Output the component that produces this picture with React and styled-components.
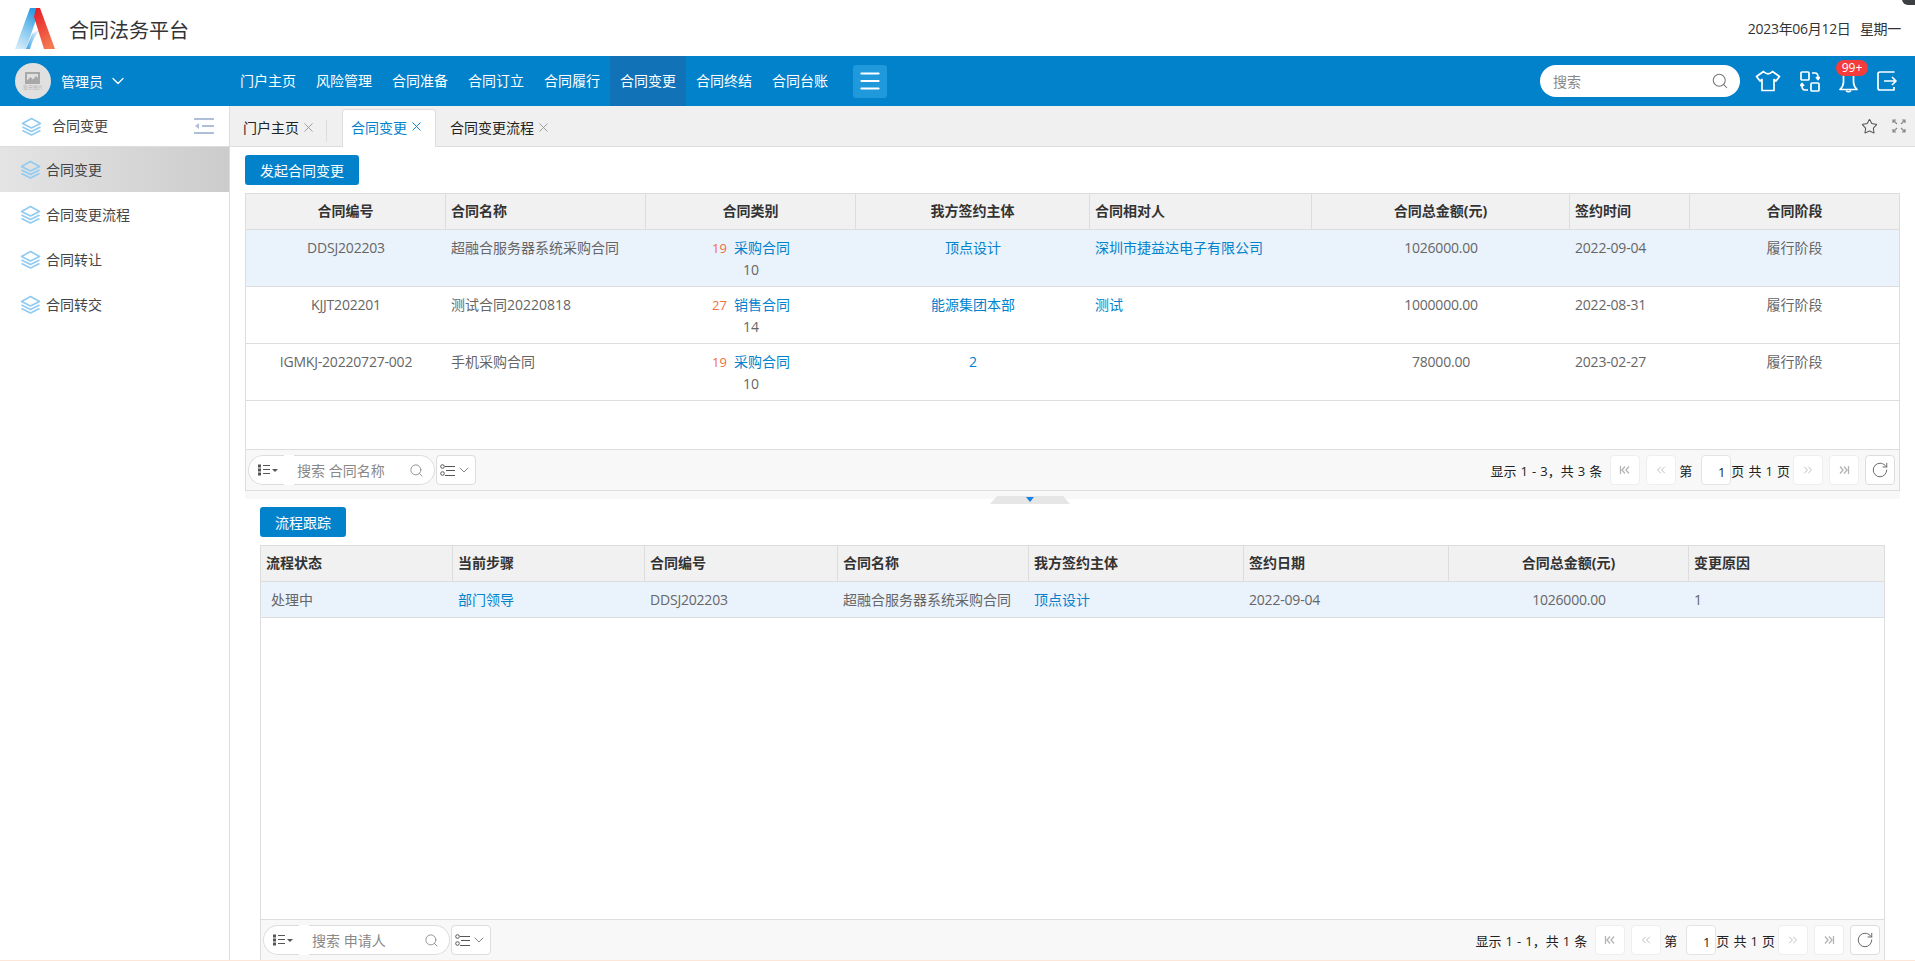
import React from "react";
import styled, { createGlobalStyle } from "styled-components";
import { ChevronDown, ChevronsLeft, ChevronsRight, Menu, RotateCw, Search, Star, X } from "lucide-react";

const GlobalStyle = createGlobalStyle`
  html, body, #root {
    margin: 0;
    height: 100%;
  }
  body {
    font-family: "Open Sans", "Noto Sans CJK SC", sans-serif;
    font-size: 14px;
    color: #333;
    background: #fff;
    overflow: hidden;
  }
  * {
    box-sizing: border-box;
  }
`;

const menus = ["门户主页", "风险管理", "合同准备", "合同订立", "合同履行", "合同变更", "合同终结", "合同台账"];
const sideItems = ["合同变更", "合同变更流程", "合同转让", "合同转交"];

const contractCols = [
  { title: "合同编号", key: "no", align: "center", tight: true },
  { title: "合同名称", key: "name", align: "left" },
  { title: "合同类别", key: "type", align: "center" },
  { title: "我方签约主体", key: "owner", align: "center", link: true },
  { title: "合同相对人", key: "other", align: "left", link: true },
  { title: "合同总金额(元)", key: "amount", align: "center", tight: true },
  { title: "签约时间", key: "date", align: "left", tight: true },
  { title: "合同阶段", key: "stage", align: "center" },
];

const contracts = [
  { no: "DDSJ202203", name: "超融合服务器系统采购合同", count: 19, type: "采购合同", sub: 10, owner: "顶点设计", other: "深圳市捷益达电子有限公司", amount: "1026000.00", date: "2022-09-04", stage: "履行阶段" },
  { no: "KJJT202201", name: "测试合同20220818", count: 27, type: "销售合同", sub: 14, owner: "能源集团本部", other: "测试", amount: "1000000.00", date: "2022-08-31", stage: "履行阶段" },
  { no: "IGMKJ-20220727-002", name: "手机采购合同", count: 19, type: "采购合同", sub: 10, owner: "2", other: "", amount: "78000.00", date: "2023-02-27", stage: "履行阶段" },
];

const flowCols = [
  { title: "流程状态", key: "state", align: "left", inset: true },
  { title: "当前步骤", key: "step", align: "left", link: true },
  { title: "合同编号", key: "no", align: "left", tight: true },
  { title: "合同名称", key: "name", align: "left" },
  { title: "我方签约主体", key: "owner", align: "left", link: true },
  { title: "签约日期", key: "date", align: "left", tight: true },
  { title: "合同总金额(元)", key: "amount", align: "center", tight: true },
  { title: "变更原因", key: "reason", align: "left" },
];

const flows = [
  { state: "处理中", step: "部门领导", no: "DDSJ202203", name: "超融合服务器系统采购合同", owner: "顶点设计", date: "2022-09-04", amount: "1026000.00", reason: "1" },
];

const Page = styled.div`
  display: flex;
  flex-direction: column;
  height: 961px;
  width: 1915px;
  overflow: hidden;
  border-bottom: 1px solid #fbe6d8;
  position: relative;
`;

const CornerMark = styled.div`
  position: absolute;
  top: -8px;
  right: -6px;
  width: 19px;
  height: 13px;
  border-radius: 6px;
  background: #3c4043;
`;

const TopBar = styled.header`
  height: 56px;
  flex: none;
  display: flex;
  align-items: center;
  padding: 0 14px 0 15px;
`;

const Title = styled.h1`
  margin: 2px 0 0 14px;
  font-size: 20px;
  font-weight: 400;
  color: #333;
`;

const DateText = styled.div`
  margin-left: auto;
  font-size: 14px;
  color: #333;
  word-spacing: 6px;
  letter-spacing: -0.3px;
`;

const NavBar = styled.nav`
  height: 50px;
  flex: none;
  display: flex;
  align-items: center;
  background: #0382cc;
  color: #fff;
  padding: 0 18px 0 15px;
`;

const Avatar = styled.div`
  width: 36px;
  height: 36px;
  border-radius: 50%;
  background: #e0e0e0;
  color: #b4b4b4;
  display: flex;
  flex-direction: column;
  align-items: center;
  justify-content: center;
  flex: none;
  font-size: 5px;
  line-height: 7px;
`;

const UserName = styled.div`
  display: flex;
  align-items: center;
  gap: 5px;
  width: 169px;
  margin-left: 10px;
  padding-bottom: 1px;
`;

const MenuItem = styled.a`
  width: 76px;
  height: 50px;
  line-height: 50px;
  text-align: center;
  flex: none;
  background: ${(p) => (p.$active ? "#1172b8" : "transparent")};
`;

const MenuToggle = styled.button`
  width: 34px;
  height: 33px;
  margin-left: 15px;
  padding: 0;
  border: 0;
  border-radius: 3px;
  background: #1f98dc;
  color: #fff;
  display: flex;
  align-items: center;
  justify-content: center;
`;

const SearchBox = styled.div`
  margin-left: auto;
  width: 200px;
  height: 32px;
  border-radius: 16px;
  background: #fff;
  color: #888;
  display: flex;
  align-items: center;
  justify-content: space-between;
  padding: 0 11px 0 13px;
  font-size: 14px;
  transform: translateX(1px);
`;

const ToolIcons = styled.div`
  display: flex;
  align-items: center;
  gap: 19px;
  margin-left: 16px;
`;

const BellWrap = styled.div`
  position: relative;
  display: flex;
`;

const Badge = styled.span`
  position: absolute;
  top: -9px;
  left: -3px;
  width: 32px;
  height: 16px;
  border-radius: 8px;
  background: #f43c3c;
  color: #fff;
  font-size: 12px;
  line-height: 16px;
  text-align: center;
`;

const Body = styled.div`
  flex: 1;
  display: flex;
  min-height: 0;
`;

const Sidebar = styled.aside`
  width: 230px;
  flex: none;
  border-right: 1px solid #ddd;
`;

const SideHead = styled.div`
  height: 41px;
  display: flex;
  align-items: center;
  padding: 0 15px 0 21px;
  color: #444;
  border-bottom: 1px solid #ddd;
  svg:last-child {
    margin-left: auto;
  }
`;

const SideHeadLabel = styled.span`
  margin-left: 10px;
  padding-bottom: 3px;
`;

const SideItem = styled.div`
  height: 45px;
  display: flex;
  align-items: center;
  gap: 5px;
  padding-left: 20px;
  color: #444;
  background: ${(p) => (p.$active ? "linear-gradient(90deg, #e4e4e4, #cccccc)" : "transparent")};
`;

const SideLabel = styled.span`
  padding-bottom: 2px;
`;

const Main = styled.main`
  flex: 1;
  min-width: 0;
  display: flex;
  flex-direction: column;
`;

const TabsBar = styled.div`
  height: 41px;
  flex: none;
  display: flex;
  align-items: flex-end;
  background: #f0f0f0;
  border-bottom: 1px solid #ddd;
  padding: 0 9px 0 13px;
`;

const Tab = styled.div`
  height: ${(p) => (p.$active ? "38px" : "36px")};
  display: flex;
  align-items: center;
  gap: 2px;
  padding: ${(p) => (p.$active ? "0 11px 4px 8px" : "0 1px 4px 0")};
  margin-bottom: -1px;
  margin-left: ${(p) => p.$left || 0}px;
  color: ${(p) => (p.$active ? "#0382cc" : "#222")};
  background: ${(p) => (p.$active ? "#fff" : "transparent")};
  border: ${(p) => (p.$active ? "1px solid #ddd" : "0")};
  border-bottom: 0;
  border-radius: 3px 3px 0 0;
  svg {
    color: ${(p) => (p.$active ? "#0382cc" : "#999")};
  }
`;

const TabSep = styled.i`
  width: 1px;
  height: 22px;
  margin: 0 15px 4px 9px;
  background: #ddd;
`;

const TabTools = styled.div`
  margin-left: auto;
  align-self: center;
  display: flex;
  align-items: center;
  gap: 14px;
  color: #555;
`;

const UpperPane = styled.section`
  height: 344px;
  flex: none;
  display: flex;
  flex-direction: column;
  padding: 8px 15px 0;
`;

const LowerPane = styled.section`
  flex: 1;
  min-height: 0;
  display: flex;
  flex-direction: column;
  padding: 3px 30px 0 30px;
`;

const ActionButton = styled.button`
  height: 30px;
  width: ${(p) => p.$width}px;
  flex: none;
  padding: 0;
  border: 0;
  border-radius: 3px;
  background: #0382cc;
  color: #fff;
  font: inherit;
`;

const TableBox = styled.div`
  flex: 1;
  min-height: 0;
  margin-top: ${(p) => p.$top}px;
  display: flex;
  flex-direction: column;
  border: 1px solid #ddd;
  border-bottom: ${(p) => (p.$open ? "0" : "1px solid #ddd")};
`;

const HeadRow = styled.div`
  height: 36px;
  flex: none;
  display: grid;
  grid-template-columns: ${(p) => p.$cols};
  background: #f1f1f1;
  border-bottom: 1px solid #ddd;
  font-weight: 700;
  color: #333;
`;

const HeadCell = styled.div`
  line-height: 33px;
  padding: 0 5px;
  text-align: ${(p) => p.$align};
  white-space: nowrap;
  border-right: 1px solid #ddd;
  &:last-child {
    border-right: 0;
  }
`;

const Rows = styled.div`
  flex: 1;
  min-height: 0;
`;

const Row = styled.div`
  height: ${(p) => p.$height}px;
  display: grid;
  grid-template-columns: ${(p) => p.$cols};
  background: ${(p) => (p.$selected ? "#eaf2fc" : "#fff")};
  border-bottom: 1px solid #ddd;
  color: #666;
  line-height: 21px;
`;

const Cell = styled.div`
  padding: ${(p) => (p.$inset ? "7px 5px 0 10px" : "7px 5px 0")};
  text-align: ${(p) => p.$align};
  white-space: nowrap;
  color: ${(p) => (p.$link ? "#0382cc" : "#666")};
  letter-spacing: ${(p) => (p.$tight ? "-0.2px" : "normal")};
`;

const Count = styled.span`
  color: #f0703a;
  font-size: 13px;
  margin-right: 7px;
`;

const TypeLink = styled.span`
  color: #0382cc;
`;

const FootBar = styled.div`
  height: 41px;
  flex: none;
  display: flex;
  align-items: center;
  justify-content: space-between;
  padding: 0 4px 0 2px;
  background: #f8f8f8;
  border-top: 1px solid #ddd;
`;

const FootLeft = styled.div`
  display: flex;
  align-items: center;
`;

const ListPicker = styled.div`
  width: 36px;
  height: 30px;
  display: flex;
  align-items: center;
  justify-content: flex-end;
  gap: 2px;
  padding-right: 6px;
  background: #fff;
  border: 1px solid #ddd;
  border-right: 0;
  border-radius: 15px 0 0 15px;
  color: #555;
`;

const Caret = styled.i`
  width: 0;
  height: 0;
  border-top: 3px solid #555;
  border-left: 3px solid transparent;
  border-right: 3px solid transparent;
`;

const SearchField = styled.div`
  width: 141px;
  height: 30px;
  margin-left: 10px;
  display: flex;
  align-items: center;
  justify-content: space-between;
  padding: 0 10px 0 3px;
  background: #fff;
  border: 1px solid #ddd;
  border-left: 0;
  border-radius: 0 15px 15px 0;
  color: #888;
  box-shadow: -10px 0 0 #fff;
`;

const ColumnButton = styled.div`
  width: 40px;
  height: 30px;
  margin-left: 1px;
  display: flex;
  align-items: center;
  justify-content: center;
  gap: 1px;
  background: #fff;
  border: 1px solid #ddd;
  border-radius: 4px;
  color: #777;
`;

const Pager = styled.div`
  display: flex;
  align-items: center;
  font-size: 13px;
  color: #222;
`;

const PagerText = styled.span`
  margin: ${(p) => p.$margin || "0"};
  white-space: nowrap;
  word-spacing: 0.7px;
`;

const PageButton = styled.div`
  width: 30px;
  height: 30px;
  margin-left: ${(p) => p.$left || 0}px;
  display: flex;
  align-items: center;
  justify-content: center;
  background: #fff;
  border: 1px solid ${(p) => (p.$strong ? "#ddd" : "#eee")};
  border-radius: 4px;
  color: ${(p) => (p.$strong ? "#666" : "#b4b4b4")};
`;

const PageInput = styled.div`
  width: 30px;
  height: 30px;
  margin-left: 9px;
  padding-right: 5px;
  line-height: 32px;
  text-align: right;
  background: #fff;
  border: 1px solid #e4e4e4;
  border-radius: 4px;
`;

const Divider = styled.div`
  height: 13px;
  flex: none;
  margin: 0 15px;
  display: flex;
  justify-content: center;
  align-items: flex-end;
  background: linear-gradient(#f8f8f8 8px, transparent 8px);
  padding-right: 85px;
`;

const Handle = styled.div`
  width: 80px;
  height: 8px;
  display: flex;
  justify-content: center;
  padding-top: 1px;
  background: #e6e6e6;
  clip-path: polygon(7px 0, 73px 0, 100% 100%, 0 100%);
  i {
    width: 0;
    height: 0;
    border-top: 5px solid #1b7fe8;
    border-left: 4px solid transparent;
    border-right: 4px solid transparent;
  }
`;

const Logo = () => (
  <svg width="40" height="41" viewBox="0 0 40 41">
    <defs>
      <linearGradient id="logoBlue" x1="0.2" y1="1" x2="0.6" y2="0">
        <stop offset="0" stopColor="#d2ebfa" />
        <stop offset="0.55" stopColor="#7cc3ee" />
        <stop offset="1" stopColor="#2b9ae0" />
      </linearGradient>
      <linearGradient id="logoFold" x1="1" y1="0" x2="0" y2="1">
        <stop offset="0" stopColor="#ffffff" />
        <stop offset="1" stopColor="#3fa3e6" />
      </linearGradient>
      <linearGradient id="logoRed" x1="0.2" y1="0" x2="0.6" y2="1">
        <stop offset="0" stopColor="#e61f2a" />
        <stop offset="1" stopColor="#f4794f" />
      </linearGradient>
    </defs>
    <path d="M15 0H25L11 41H0Z" fill="url(#logoBlue)" />
    <path d="M11 41L17 26Q21 23 26 21Q18 29 15 41Z" fill="url(#logoFold)" />
    <path d="M21 0H25L40 41H29L19 9Z" fill="url(#logoRed)" />
  </svg>
);

const LayersIcon = () => (
  <svg width="21" height="21" viewBox="0 0 21 21" fill="none" stroke="#8fcbf3" strokeWidth="1.6" strokeLinejoin="round">
    <path d="M10.5 2.5L19.5 7.5L10.5 12L1.5 7.5Z" />
    <path d="M1.5 11L10.5 15.5L19.5 11" />
    <path d="M1.5 14.5L10.5 19L19.5 14.5" />
  </svg>
);

const SideToggleIcon = () => (
  <svg width="20" height="20" viewBox="0 0 20 20" fill="none" stroke="#b0bfd8" strokeWidth="2">
    <path d="M0 3H20M8 10H20M0 17H20" />
    <path d="M5 7V13L1 10Z" fill="#b0bfd8" stroke="none" />
  </svg>
);

const ShirtIcon = () => (
  <svg width="26" height="22" viewBox="0 0 26 22" fill="none" stroke="#fff" strokeWidth="1.7" strokeLinejoin="round">
    <path d="M8.5 1.5L1.5 6.5L5 11L7 9.5V20.5H19V9.5L21 11L24.5 6.5L17.5 1.5Q13 6 8.5 1.5Z" />
  </svg>
);

const SwitchIcon = () => (
  <svg width="20" height="21" viewBox="0 0 20 21" fill="none" stroke="#fff" strokeWidth="1.7" strokeLinejoin="round">
    <rect x="1" y="1" width="8" height="8" rx="1" />
    <rect x="11" y="12" width="8" height="8" rx="1" />
    <path d="M12 2H15Q18 2 18 6V8M16 6L18 8.5L20 6" />
    <path d="M8 19H5Q2 19 2 15V13M0 15L2 12.5L4 15" />
  </svg>
);

const BellIcon = () => (
  <svg width="19" height="24" viewBox="0 0 19 24" fill="none" stroke="#fff" strokeWidth="1.7" strokeLinejoin="round">
    <path d="M4.5 4V13Q4.5 17 1 20.5H18Q14.5 17 14.5 13V4" />
    <path d="M7 21.5Q9.5 24 12 21.5" />
  </svg>
);

const ExitIcon = () => (
  <svg width="20" height="20" viewBox="0 0 20 20" fill="none" stroke="#fff" strokeWidth="1.7" strokeLinejoin="round">
    <path d="M17 1.5V1H3Q1 1 1 3V17Q1 19 3 19H17V16" />
    <path d="M7 10H19M15 6L19 10L15 14" />
  </svg>
);

const ExpandIcon = () => (
  <svg width="14" height="14" viewBox="0 0 14 14" fill="none" stroke="#888" strokeWidth="1.2">
    <path d="M1 4V1H4M1 1L5 5M10 1H13V4M13 1L9 5M1 10V13H4M1 13L5 9M10 13H13V10M13 13L9 9" />
  </svg>
);

const ListIcon = () => (
  <svg width="12" height="12" viewBox="0 0 12 12" fill="#555">
    <rect x="0" y="0.5" width="3" height="3" />
    <rect x="0" y="4.5" width="3" height="3" />
    <rect x="0" y="8.5" width="3" height="3" />
    <rect x="5" y="1" width="7" height="1" />
    <rect x="5" y="5" width="7" height="1" />
    <rect x="5" y="9" width="7" height="1" />
  </svg>
);

const ColumnsIcon = () => (
  <svg width="15" height="13" viewBox="0 0 15 13" fill="none" stroke="#555">
    <circle cx="2.5" cy="2.5" r="1.8" />
    <circle cx="2.5" cy="9.5" r="1.8" />
    <path d="M5 2.5H15M6 6.5H15M5 11.5H15" />
  </svg>
);

const FirstIcon = () => (
  <svg width="12" height="12" viewBox="0 0 12 12" fill="none" stroke="#b4b4b4" strokeWidth="1.3">
    <path d="M1.5 2V10M6 2.5L3 6L6 9.5M10 2.5L7 6L10 9.5" />
  </svg>
);

const LastIcon = () => (
  <svg width="12" height="12" viewBox="0 0 12 12" fill="none" stroke="#b4b4b4" strokeWidth="1.3">
    <path d="M10.5 2V10M6 2.5L9 6L6 9.5M2 2.5L5 6L2 9.5" />
  </svg>
);

const DataTable = ({ columns, template, rows, rowHeight, top, open, selectedIndex, placeholder, info, renderCell }) => (
  <TableBox $top={top} $open={open}>
    <HeadRow $cols={template}>
      {columns.map((col) => (
        <HeadCell key={col.title} $align={col.align}>{col.title}</HeadCell>
      ))}
    </HeadRow>
    <Rows>
      {rows.map((row, index) => (
        <Row key={row.no} $cols={template} $height={rowHeight} $selected={index === selectedIndex}>
          {columns.map((col) => (
            <Cell key={col.key} $align={col.align} $link={col.link} $inset={col.inset} $tight={col.tight}>
              {renderCell ? renderCell(col, row) : row[col.key]}
            </Cell>
          ))}
        </Row>
      ))}
    </Rows>
    <FootBar>
      <FootLeft>
        <ListPicker><ListIcon /><Caret /></ListPicker>
        <SearchField>
          {placeholder}
          <Search size={15} strokeWidth={1.4} color="#888" />
        </SearchField>
        <ColumnButton>
          <ColumnsIcon />
          <ChevronDown size={16} strokeWidth={1.5} color="#888" />
        </ColumnButton>
      </FootLeft>
      <Pager>
        <PagerText $margin="0 8px 0 0">{info}</PagerText>
        <PageButton><FirstIcon /></PageButton>
        <PageButton $left={6}><ChevronsLeft size={14} strokeWidth={1.5} /></PageButton>
        <PagerText $margin="0 0 0 3px">第</PagerText>
        <PageInput>1</PageInput>
        <PagerText>页 共 1 页</PagerText>
        <PageButton $left={3}><ChevronsRight size={14} strokeWidth={1.5} /></PageButton>
        <PageButton $left={6}><LastIcon /></PageButton>
        <PageButton $left={6} $strong><RotateCw size={18} strokeWidth={1.3} /></PageButton>
      </Pager>
    </FootBar>
  </TableBox>
);

const contractCell = (col, row) => {
  if (col.key === "type") {
    return (
      <>
        <Count>{row.count}</Count>
        <TypeLink>{row.type}</TypeLink>
        <br />
        {row.sub}
      </>
    );
  }
  return row[col.key];
};

export default function App() {
  return (
    <Page>
      <GlobalStyle />
      <CornerMark />
      <TopBar>
        <Logo />
        <Title>合同法务平台</Title>
        <DateText>2023年06月12日 星期一</DateText>
      </TopBar>
      <NavBar>
        <Avatar>
          <svg width="17" height="13" viewBox="0 0 17 13" fill="#a8a8a8">
            <path d="M0 1H15V13H0ZM2 9.5L5.5 6L8 8.5L11 5L13 7V3H2Z" fillRule="evenodd" />
          </svg>
          暂无图片
        </Avatar>
        <UserName>
          管理员
          <ChevronDown size={20} strokeWidth={1.5} />
        </UserName>
        {menus.map((name) => (
          <MenuItem key={name} $active={name === "合同变更"}>{name}</MenuItem>
        ))}
        <MenuToggle><Menu size={26} strokeWidth={1.8} /></MenuToggle>
        <SearchBox>
          搜索
          <Search size={18} strokeWidth={1.4} color="#777" />
        </SearchBox>
        <ToolIcons>
          <ShirtIcon />
          <SwitchIcon />
          <BellWrap>
            <BellIcon />
            <Badge>99+</Badge>
          </BellWrap>
          <ExitIcon />
        </ToolIcons>
      </NavBar>
      <Body>
        <Sidebar>
          <SideHead>
            <LayersIcon />
            <SideHeadLabel>合同变更</SideHeadLabel>
            <SideToggleIcon />
          </SideHead>
          {sideItems.map((name, index) => (
            <SideItem key={name} $active={index === 0}>
              <LayersIcon />
              <SideLabel>{name}</SideLabel>
            </SideItem>
          ))}
        </Sidebar>
        <Main>
          <TabsBar>
            <Tab>门户主页<X size={15} strokeWidth={1.5} /></Tab>
            <TabSep />
            <Tab $active>合同变更<X size={15} strokeWidth={1.5} /></Tab>
            <Tab $left={14}>合同变更流程<X size={15} strokeWidth={1.5} /></Tab>
            <TabTools>
              <Star size={17} strokeWidth={1.5} />
              <ExpandIcon />
            </TabTools>
          </TabsBar>
          <UpperPane>
            <ActionButton $width={114}>发起合同变更</ActionButton>
            <DataTable
              columns={contractCols}
              template="200px 200px 210px 234px 222px 258px 120px 1fr"
              rows={contracts}
              rowHeight={57}
              top={8}
              selectedIndex={0}
              placeholder="搜索 合同名称"
              info="显示 1 - 3，共 3 条"
              renderCell={contractCell}
            />
          </UpperPane>
          <Divider>
            <Handle><i /></Handle>
          </Divider>
          <LowerPane>
            <ActionButton $width={86}>流程跟踪</ActionButton>
            <DataTable
              columns={flowCols}
              template="192px 192px 193px 191px 215px 205px 240px 1fr"
              rows={flows}
              rowHeight={36}
              top={8}
              open
              selectedIndex={0}
              placeholder="搜索 申请人"
              info="显示 1 - 1，共 1 条"
            />
          </LowerPane>
        </Main>
      </Body>
    </Page>
  );
}
